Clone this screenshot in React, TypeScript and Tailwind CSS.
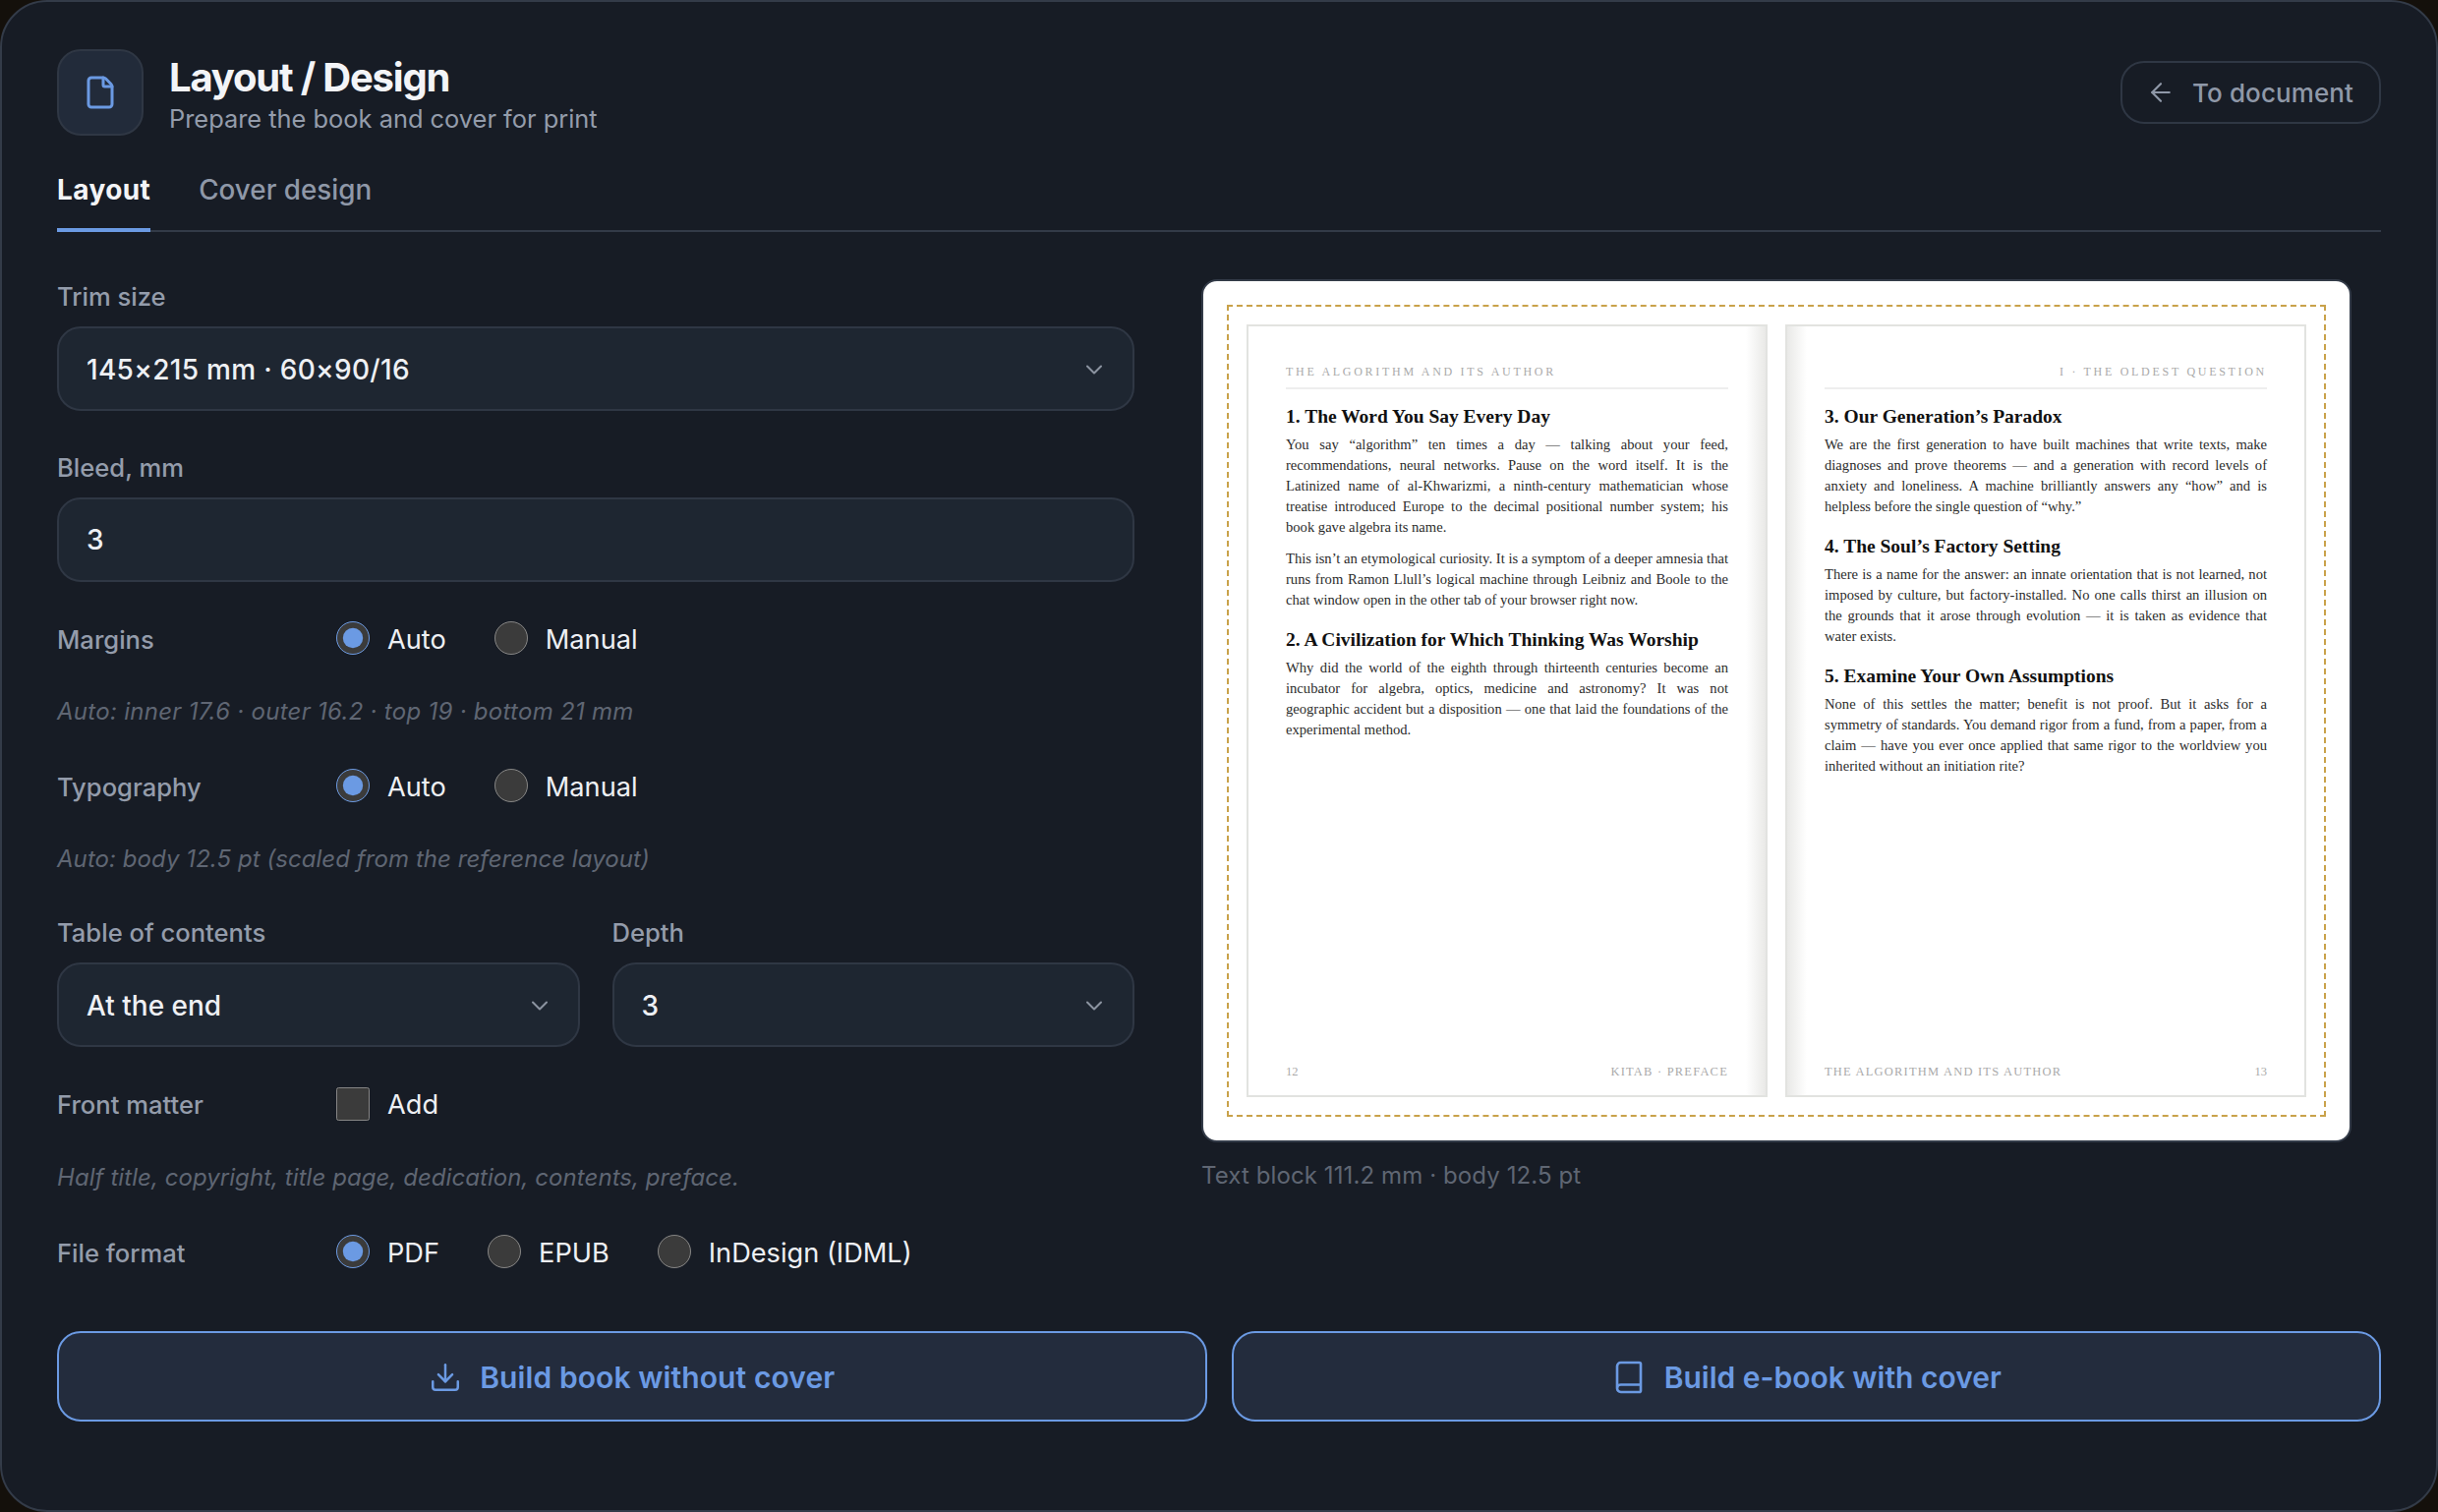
import { ArrowLeft, Book, ChevronDown, Download, File } from "lucide-react";

const Label = ({ children }: { children: string }) => (
  <div className="h-9 text-[25.6px] font-medium leading-9 text-[#949cab]">{children}</div>
);

const Hint = ({ children, className }: { children: string; className: string }) => (
  <div className={`h-9 text-[24px] italic leading-9 text-[#5f6673] ${className}`}>{children}</div>
);

function SelectBox({ value, wide }: { value: string; wide?: boolean }) {
  return (
    <button className="mt-3 flex h-[86px] w-full items-center justify-between rounded-3xl border-2 border-[#2f3744] bg-[#1e2631] pl-[28px] pr-[25px] text-[28px] font-medium text-[#eef0f4]">
      <span className={wide ? "pt-[2px] tracking-[0.3px]" : "pt-[2px]"}>{value}</span>
      <ChevronDown size={28} strokeWidth={1.75} className="mt-[2px] text-[#8b93a0]" />
    </button>
  );
}

function Choice({ name, label, checked }: { name: string; label: string; checked?: boolean }) {
  return (
    <label className="flex items-center gap-[18px] text-[27.2px] text-[#eef0f4]">
      <input
        type="radio"
        name={name}
        defaultChecked={checked}
        className="-mt-1 h-[34px] w-[34px] accent-[#6b9ae3] [color-scheme:dark]"
      />
      {label}
    </label>
  );
}

function Row({ label, className, children }: { label: string; className: string; children: React.ReactNode }) {
  return (
    <div className={`flex h-10 items-center ${className}`}>
      <div className="w-[284px] text-[25.6px] font-medium text-[#949cab]">{label}</div>
      <div className="flex items-center gap-[49px]">{children}</div>
    </div>
  );
}

function Para({ lines, className = "" }: { lines: string[]; className?: string }) {
  return (
    <div className={`text-[14.6px] leading-[21px] text-[#2c2c2c] ${className}`}>
      {lines.map((line, i) => (
        <div
          key={line}
          className={i < lines.length - 1 ? "whitespace-nowrap [text-align-last:justify]" : "whitespace-nowrap"}
        >
          {line}
        </div>
      ))}
    </div>
  );
}

const Heading = ({ children, first }: { children: string; first?: boolean }) => (
  <div className={`${first ? "mt-[15px]" : "mt-[17px]"} mb-[5px] text-[19.5px] font-bold leading-[26px] text-[#111111]`}>
    {children}
  </div>
);

function Page({
  side,
  head,
  foot,
  num,
  children,
}: {
  side: "left" | "right";
  head: string;
  foot: string;
  num: string;
  children: React.ReactNode;
}) {
  const isLeft = side === "left";
  return (
    <div
      className={`flex h-[786px] w-[530px] flex-col border-2 border-[#e2e3e0] px-[38px] pb-[15px] pt-[37px] font-['Liberation_Serif',serif] ${
        isLeft
          ? "bg-[linear-gradient(to_left,#e9e9e7,#ffffff_20px)]"
          : "bg-[linear-gradient(to_right,#e9e9e7,#ffffff_20px)]"
      }`}
    >
      <div
        className={`border-b-2 border-[#eeeeee] pb-[7px] text-[12px] leading-[18px] tracking-[2.7px] text-[#aaaaaa] ${
          isLeft ? "" : "text-right"
        }`}
      >
        {head}
      </div>
      {children}
      <div className="mt-auto flex items-center justify-between text-[12.5px] leading-[18px] tracking-[1.2px] text-[#aaaaaa]">
        {isLeft ? (
          <>
            <span className="tracking-normal">{num}</span>
            <span>{foot}</span>
          </>
        ) : (
          <>
            <span>{foot}</span>
            <span className="tracking-normal">{num}</span>
          </>
        )}
      </div>
    </div>
  );
}

export default function App() {
  return (
    <div className="h-[1538px] bg-[#14100b] font-['Inter',sans-serif]">
      <div className="flex h-full flex-col rounded-[48px] border-2 border-[#333b48] bg-[#171c25] px-14 pt-12">
        {/* Header */}
        <div className="flex items-center justify-between">
          <div className="flex items-center gap-[26px]">
            <div className="flex h-[88px] w-[88px] items-center justify-center rounded-3xl border-2 border-[#2f3744] bg-[#222b3a]">
              <File size={36} className="text-[#6b9ae3]" />
            </div>
            <div className="pt-1">
              <div className="text-[40px] font-bold leading-[48px] tracking-[-1.2px] text-[#f3f4f7]">Layout / Design</div>
              <div className="mt-px text-[25.4px] leading-[34px] text-[#949cab]">Prepare the book and cover for print</div>
            </div>
          </div>
          <button className="flex h-16 items-center gap-[17px] rounded-3xl border-2 border-[#2f3744] pl-6 pr-[26px] text-[26px] font-medium tracking-[0.1px] text-[#8f98a8]">
            <ArrowLeft size={30} strokeWidth={1.75} />
            To document
          </button>
        </div>

        {/* Tabs */}
        <div className="mt-[35px] flex gap-[49px] border-b-2 border-[#333b48]">
          <div className="-mb-[2px] border-b-4 border-[#6b9ae3] pb-[19px] text-[28px] font-bold leading-10 tracking-[0.4px] text-[#f3f4f7]">Layout</div>
          <div className="pb-[19px] text-[27.8px] font-medium leading-10 text-[#8f98a8]">Cover design</div>
        </div>

        <div className="mt-[47px] flex gap-[68px]">
          {/* Form */}
          <div className="w-[1096px] shrink-0 pt-px">
            <Label>Trim size</Label>
            <SelectBox value="145×215 mm · 60×90/16" wide />

            <div className="mt-[40px]">
              <Label>Bleed, mm</Label>
              <div className="mt-3 flex h-[86px] items-center rounded-3xl border-2 border-[#2f3744] bg-[#1e2631] pl-[28px] text-[28px] font-medium text-[#eef0f4]">
                3
              </div>
            </div>

            <Row label="Margins" className="mt-[39px]">
              <Choice name="margins" label="Auto" checked />
              <Choice name="margins" label="Manual" />
            </Row>
            <Hint className="mt-[35px] tracking-[0.28px]">Auto: inner 17.6 · outer 16.2 · top 19 · bottom 21 mm</Hint>

            <Row label="Typography" className="mt-[39px]">
              <Choice name="typography" label="Auto" checked />
              <Choice name="typography" label="Manual" />
            </Row>
            <Hint className="mt-[35px] tracking-[0.06px]">Auto: body 12.5 pt (scaled from the reference layout)</Hint>

            <div className="mt-[39px] flex gap-[33px]">
              <div className="flex-1">
                <Label>Table of contents</Label>
                <SelectBox value="At the end" />
              </div>
              <div className="flex-1">
                <Label>Depth</Label>
                <SelectBox value="3" />
              </div>
            </div>

            <Row label="Front matter" className="mt-[39px]">
              <label className="flex items-center gap-[18px] text-[27.2px] text-[#eef0f4]">
                <input type="checkbox" className="-mt-[2px] h-[34px] w-[34px] accent-[#6b9ae3] [color-scheme:dark]" />
                Add
              </label>
            </Row>
            <Hint className="mt-9 tracking-[0.06px]">Half title, copyright, title page, dedication, contents, preface.</Hint>

            <Row label="File format" className="mt-[39px]">
              <Choice name="format" label="PDF" checked />
              <Choice name="format" label="EPUB" />
              <Choice name="format" label="InDesign (IDML)" />
            </Row>
          </div>

          {/* Preview */}
          <div className="pt-px">
            <div className="w-[1170px] rounded-2xl border-2 border-[#333b48] bg-white p-6">
              <div className="flex justify-between border-2 border-dashed border-[#c9a24a] p-[18px]">
                <Page side="left" head="THE ALGORITHM AND ITS AUTHOR" foot="KITAB · PREFACE" num="12">
                  <Heading first>1. The Word You Say Every Day</Heading>
                  <Para
                    lines={[
                      "You say “algorithm” ten times a day — talking about your feed,",
                      "recommendations, neural networks. Pause on the word itself. It is the",
                      "Latinized name of al-Khwarizmi, a ninth-century mathematician whose",
                      "treatise introduced Europe to the decimal positional number system; his",
                      "book gave algebra its name.",
                    ]}
                  />
                  <Para
                    className="mt-[11px]"
                    lines={[
                      "This isn’t an etymological curiosity. It is a symptom of a deeper amnesia that",
                      "runs from Ramon Llull’s logical machine through Leibniz and Boole to the",
                      "chat window open in the other tab of your browser right now.",
                    ]}
                  />
                  <Heading>2. A Civilization for Which Thinking Was Worship</Heading>
                  <Para
                    lines={[
                      "Why did the world of the eighth through thirteenth centuries become an",
                      "incubator for algebra, optics, medicine and astronomy? It was not",
                      "geographic accident but a disposition — one that laid the foundations of the",
                      "experimental method.",
                    ]}
                  />
                </Page>
                <Page side="right" head="I · THE OLDEST QUESTION" foot="THE ALGORITHM AND ITS AUTHOR" num="13">
                  <Heading first>3. Our Generation’s Paradox</Heading>
                  <Para
                    lines={[
                      "We are the first generation to have built machines that write texts, make",
                      "diagnoses and prove theorems — and a generation with record levels of",
                      "anxiety and loneliness. A machine brilliantly answers any “how” and is",
                      "helpless before the single question of “why.”",
                    ]}
                  />
                  <Heading>4. The Soul’s Factory Setting</Heading>
                  <Para
                    lines={[
                      "There is a name for the answer: an innate orientation that is not learned, not",
                      "imposed by culture, but factory-installed. No one calls thirst an illusion on",
                      "the grounds that it arose through evolution — it is taken as evidence that",
                      "water exists.",
                    ]}
                  />
                  <Heading>5. Examine Your Own Assumptions</Heading>
                  <Para
                    lines={[
                      "None of this settles the matter; benefit is not proof. But it asks for a",
                      "symmetry of standards. You demand rigor from a fund, from a paper, from a",
                      "claim — have you ever once applied that same rigor to the worldview you",
                      "inherited without an initiation rite?",
                    ]}
                  />
                </Page>
              </div>
            </div>
            <div className="mt-4 h-9 text-[24px] leading-9 tracking-[0.1px] text-[#5f6673]">Text block 111.2 mm · body 12.5 pt</div>
          </div>
        </div>

        {/* Actions */}
        <div className="mt-[59px] flex gap-[25px]">
          <button className="flex h-[92px] flex-1 items-center justify-center gap-[18px] rounded-3xl border-2 border-[#6b9ae3] bg-[#232c3d] pt-[2px] text-[30px] font-semibold tracking-[0.1px] text-[#6b9ae3]">
            <Download size={34} strokeWidth={1.75} />
            Build book without cover
          </button>
          <button className="flex h-[92px] flex-1 items-center justify-center gap-[18px] rounded-3xl border-2 border-[#6b9ae3] bg-[#232c3d] pt-[2px] text-[30px] font-semibold text-[#6b9ae3]">
            <Book size={36} strokeWidth={1.75} />
            Build e-book with cover
          </button>
        </div>
      </div>
    </div>
  );
}
